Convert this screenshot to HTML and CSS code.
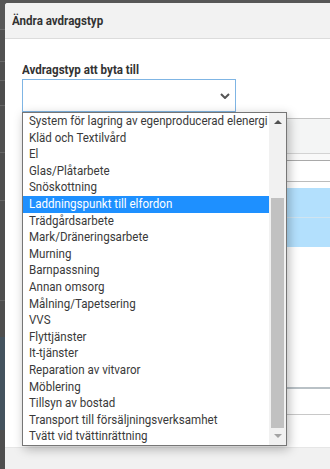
FILE: index.html
```html
<!DOCTYPE html>
<html lang="sv">
<head>
    <meta charset="UTF-8">
    <meta name="viewport" content="width=device-width, initial-scale=1.0">
    <title>Ändra avdragstyp</title>
    <link rel="stylesheet" href="styles.css">
</head>
<body>
    <div class="modal">
        <div class="modal-header">
            <h4 class="modal-title"><span class="narrow">Ändra avdragstyp</span></h4>
        </div>
        <div class="modal-body">
            <label class="field-label"><span class="narrow">Avdragstyp att byta till</span></label>
            <div class="select-wrap">
                <div class="select">
                    <svg class="chevron" width="10" height="6" viewBox="0 0 10 6"><path d="M1 1l4 4 4-4" fill="none" stroke="#555" stroke-width="2"/></svg>
                </div>
                <div class="dropdown">
                    <div class="options-view">
                        <ul class="options">
                            <li>System för lagring av egenproducerad elenergi</li>
                            <li>Kläd och Textilvård</li>
                            <li>El</li>
                            <li>Glas/Plåtarbete</li>
                            <li>Snöskottning</li>
                            <li class="active">Laddningspunkt till elfordon</li>
                            <li>Trädgårdsarbete</li>
                            <li>Mark/Dräneringsarbete</li>
                            <li>Murning</li>
                            <li>Barnpassning</li>
                            <li>Annan omsorg</li>
                            <li>Målning/Tapetsering</li>
                            <li>VVS</li>
                            <li>Flyttjänster</li>
                            <li>It-tjänster</li>
                            <li>Reparation av vitvaror</li>
                            <li>Möblering</li>
                            <li>Tillsyn av bostad</li>
                            <li>Transport till försäljningsverksamhet</li>
                            <li>Tvätt vid tvättinrättning</li>
                        </ul>
                    </div>
                    <div class="scrollbar">
                        <span class="arrow arrow-up"></span>
                        <div class="track"><div class="thumb"></div></div>
                        <span class="arrow arrow-down"></span>
                    </div>
                </div>
            </div>
            <div class="table-behind">
                <div class="tb-gap"></div>
                <div class="tb-head"></div>
                <div class="tb-sub"></div>
                <div class="tb-row"></div>
                <div class="tb-gap"></div>
                <div class="tb-sel first"></div>
                <div class="tb-sel"></div>
                <div class="tb-space"></div>
                <div class="tb-line-thick"></div>
                <div class="tb-space small"></div>
                <div class="tb-line"></div>
            </div>
        </div>
        <div class="modal-footer"></div>
    </div>
</body>
</html>
```

FILE: styles.css
```css
body { margin: 0; padding: 3px 0 0 5px; height: 469px; box-sizing: border-box; overflow: hidden; font-family: Roboto, "Liberation Sans", sans-serif; background: #4f4f4f linear-gradient(to bottom, #575757 0, #575757 29px, #6b6b6b 29px, #6b6b6b 30px, #525252 30px, #525252 61px, #6a6a6a 61px, #6a6a6a 62px, #4f4f4f 62px, #4f4f4f 80px, #666 80px, #666 81px, #4d4d4d 81px, #4d4d4d 105px, #666 105px, #666 106px, #505050 106px, #505050 152px, #656565 152px, #656565 153px, #4e4e4e 153px, #4e4e4e 200px, #656565 200px, #656565 201px, #4e4e4e 201px, #4e4e4e 300px, #626262 300px, #626262 301px, #4e4e4e 301px, #4e4e4e 337px, #44535e 337px, #44535e 430px, #4e4e4e 430px); }

/* the page font is a slightly condensed face; squeeze Roboto to match */
.narrow { display: inline-block; transform: scaleX(0.89); transform-origin: left center; white-space: nowrap; }

.modal { width: 380px; background: #fff; border-radius: 3px 0 0 0; overflow: hidden; }
.modal-header { height: 35px; display: flex; align-items: center; padding-left: 7px; background: #f2f2f2; border-bottom: 1px solid #dcdcdc; }
.modal-title { margin: 0; font-size: 13px; line-height: 15px; font-weight: bold; color: #333; }

.modal-body { height: 408px; padding: 23px 0 0 17px; box-sizing: border-box; }
.field-label { display: block; font-size: 13px; line-height: 15px; font-weight: bold; color: #333; margin-bottom: 2px; }

.select-wrap { position: relative; width: 214px; }
.select { height: 33px; box-sizing: border-box; border: 1px solid #7fb5e4; background: #fff; display: flex; align-items: center; justify-content: flex-end; padding-right: 5px; }
.chevron { display: block; }

.dropdown { position: absolute; top: 33px; left: 0; width: 265px; height: 334px; box-sizing: border-box; border: 1px solid #767676; background: #fff; display: flex; box-shadow: 2px 3px 10px rgba(0,0,0,0.28); z-index: 2; }
.options-view { flex: 1; overflow: hidden; }
.options { list-style: none; margin: 0; padding: 0; width: 112.4%; transform: scaleX(0.89); transform-origin: left top; }
.options li { height: 16.6px; line-height: 16.6px; padding-left: 6.7px; font-size: 13px; color: #3a3a3a; white-space: nowrap; overflow: hidden; }
.options li.active { background: #1e90ff; color: #fff; }

.scrollbar { width: 17px; background: #f1f1f1; display: flex; flex-direction: column; align-items: center; }
.arrow { width: 0; height: 0; border-left: 4px solid transparent; border-right: 4px solid transparent; margin: 7px 0 6px; }
.arrow-up { border-bottom: 4px solid #505050; }
.arrow-down { border-top: 4px solid #a3a3a3; margin: 6px 0 7px; }
.track { flex: 1; width: 100%; display: flex; flex-direction: column; justify-content: flex-end; }
.thumb { height: 230px; margin: 0 2px; background: #c1c1c1; }

.table-behind { margin-right: -40px; }
.tb-gap { height: 6px; }
.tb-head { height: 34px; background: #f4f5f5; border-top: 1px solid #c3c3c3; border-bottom: 1px solid #d3d3d3; }
.tb-sub { height: 6px; background: #f9f9f9; border-bottom: 1px solid #a9a9a9; }
.tb-row { height: 20px; border-bottom: 1px solid #bcbcbc; }
.tb-sel { height: 29px; background: #b3e0fd; }
.tb-sel.first { border-bottom: 1px solid #d0e4f0; }
.tb-space { height: 140px; }
.tb-space.small { height: 25px; }
.tb-line-thick { height: 2px; background: #b9c1c6; }
.tb-line { height: 1px; background: #c8c8c8; }

.modal-footer { height: 40px; background: #f1f1f1; border-top: 1px solid #e6e6e6; }
```
